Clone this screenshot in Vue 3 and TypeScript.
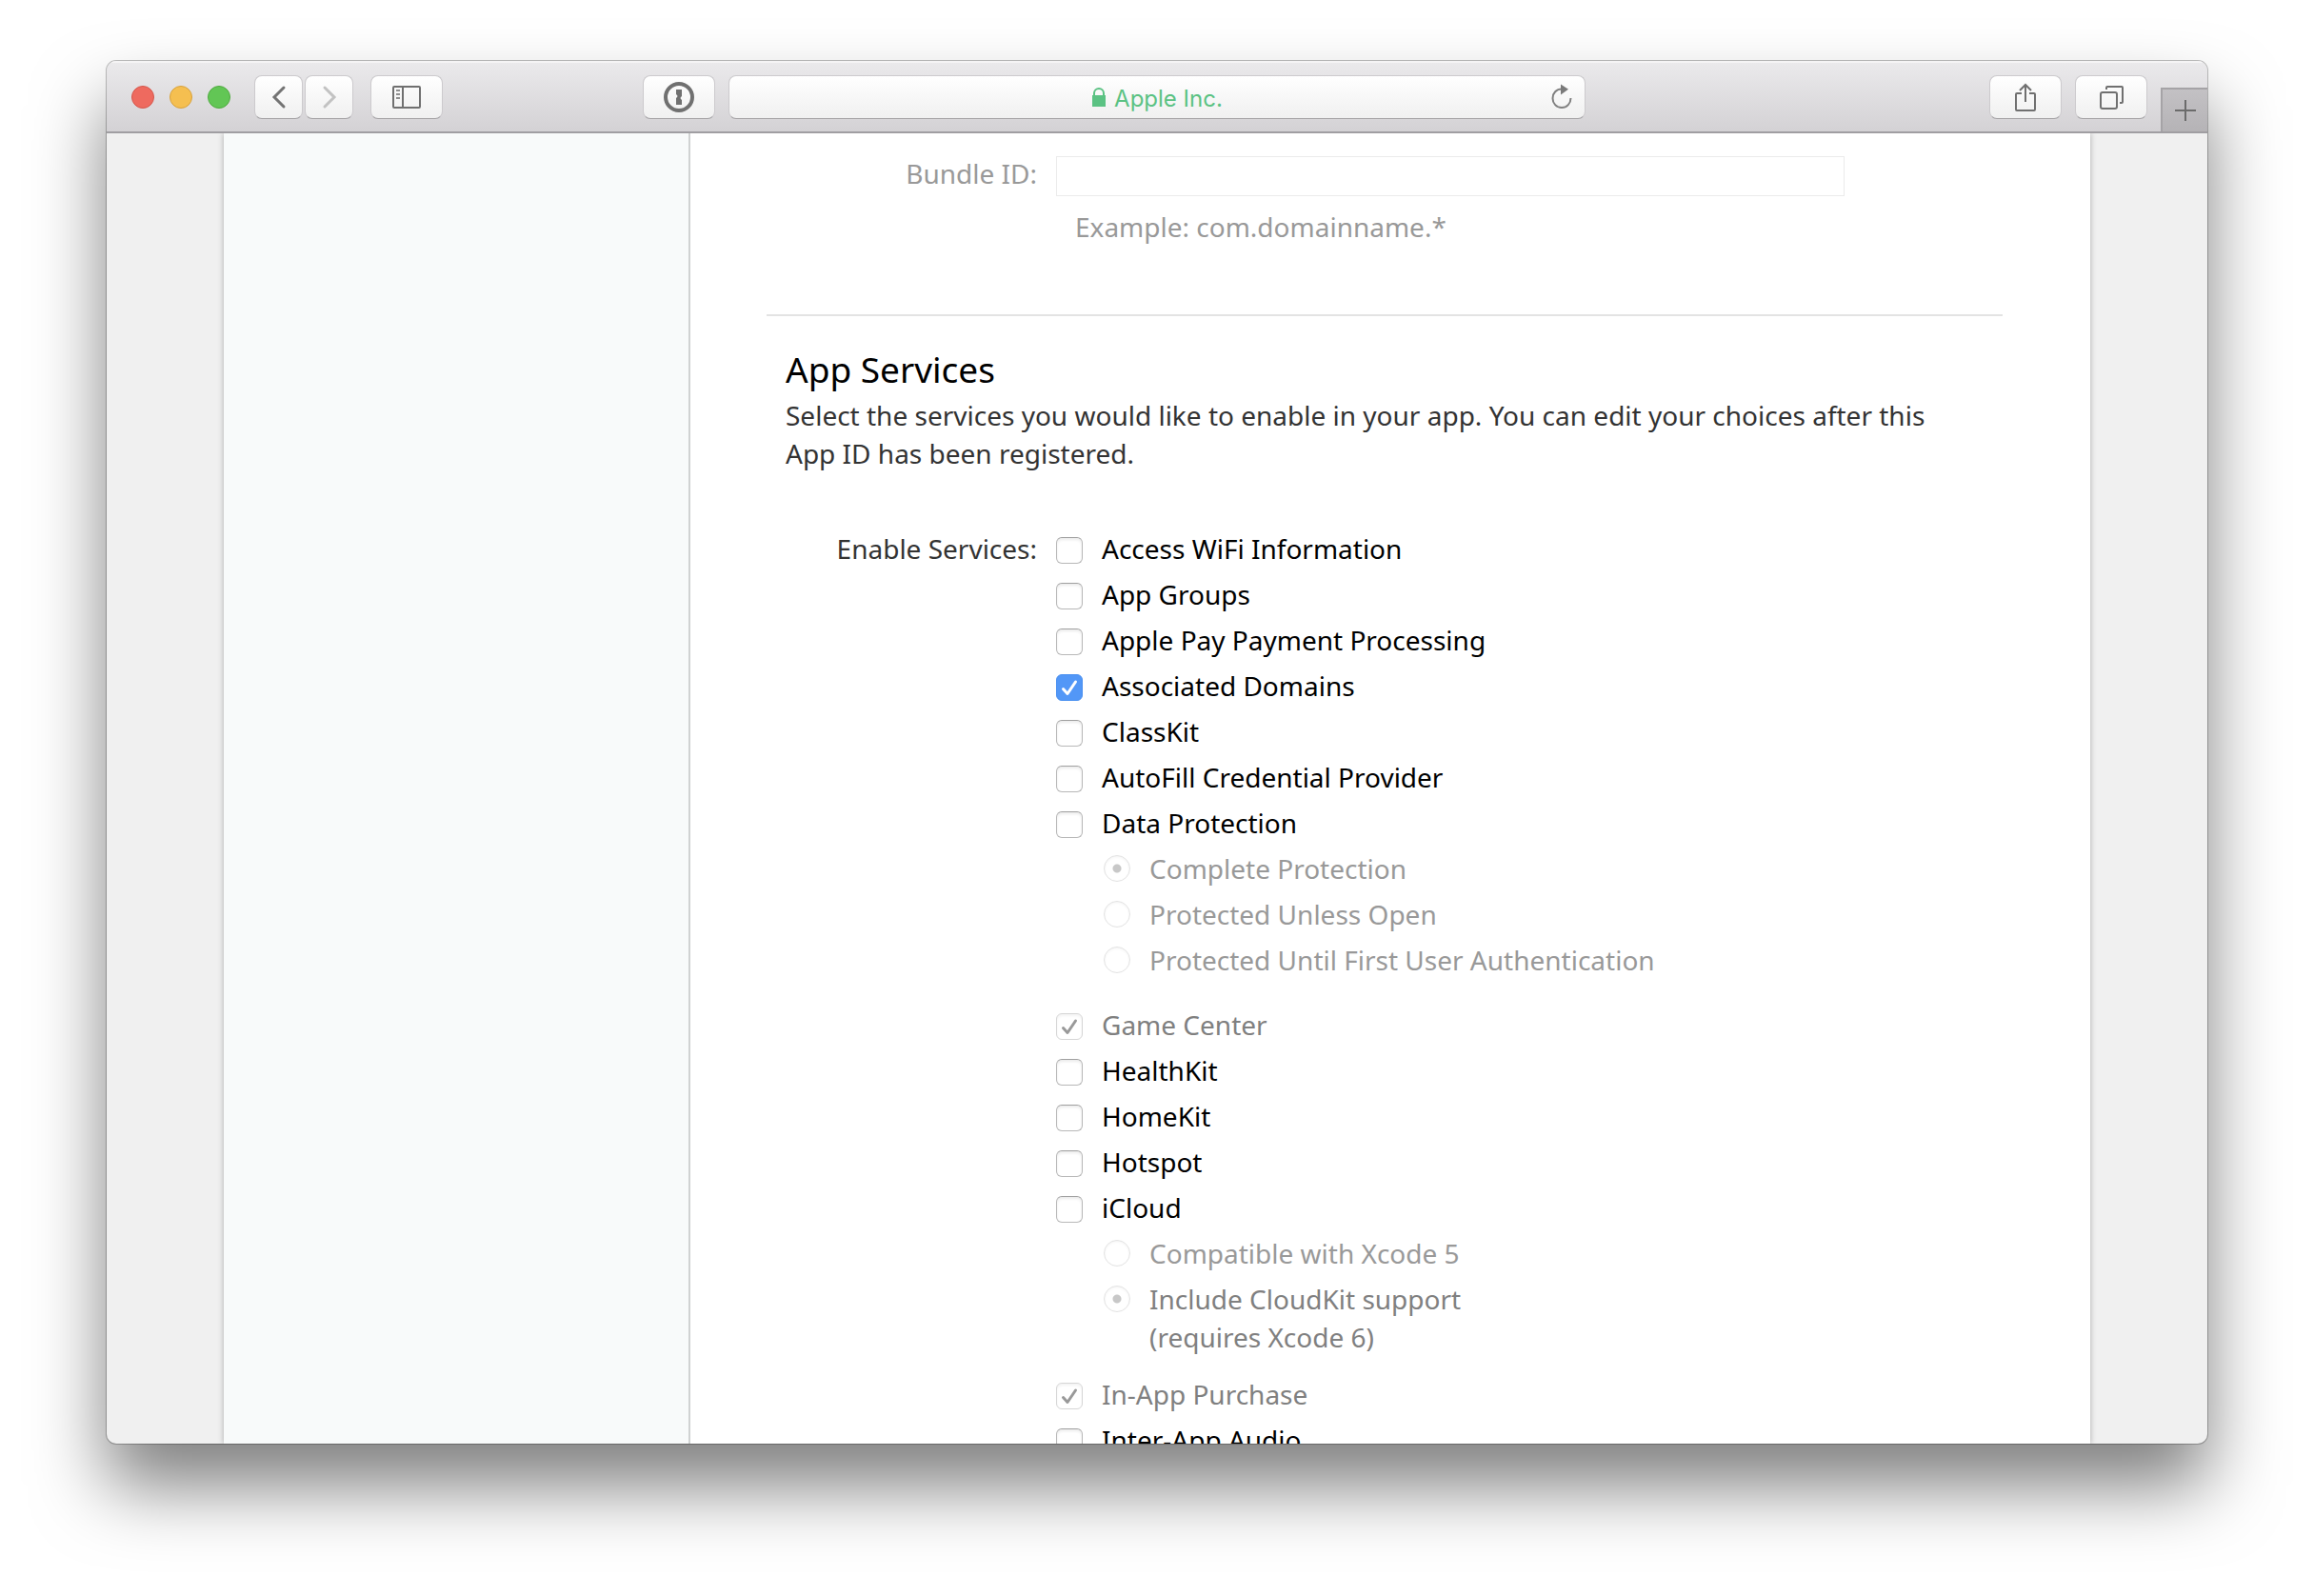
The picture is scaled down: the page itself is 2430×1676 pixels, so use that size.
<script setup lang="ts">
import { ref } from 'vue'

interface Option {
  id: string
  label: string
  note?: string
  checked?: boolean
  dim?: boolean
}

interface Service extends Option {
  locked?: boolean
  options?: Option[]
}

const bundleId = ref('')

const services = ref<Service[]>([
  { id: 'wifi', label: 'Access WiFi Information' },
  { id: 'groups', label: 'App Groups' },
  { id: 'pay', label: 'Apple Pay Payment Processing' },
  { id: 'domains', label: 'Associated Domains', checked: true },
  { id: 'classkit', label: 'ClassKit' },
  { id: 'autofill', label: 'AutoFill Credential Provider' },
  {
    id: 'data',
    label: 'Data Protection',
    options: [
      { id: 'complete', label: 'Complete Protection', checked: true },
      { id: 'unless-open', label: 'Protected Unless Open' },
      { id: 'until-auth', label: 'Protected Until First User Authentication' },
    ],
  },
  { id: 'game', label: 'Game Center', checked: true, locked: true },
  { id: 'health', label: 'HealthKit' },
  { id: 'home', label: 'HomeKit' },
  { id: 'hotspot', label: 'Hotspot' },
  {
    id: 'icloud',
    label: 'iCloud',
    options: [
      { id: 'xcode5', label: 'Compatible with Xcode 5' },
      { id: 'cloudkit', label: 'Include CloudKit support', note: '(requires Xcode 6)', checked: true, dim: true },
    ],
  },
  { id: 'iap', label: 'In-App Purchase', checked: true, locked: true },
  { id: 'audio', label: 'Inter-App Audio' },
])
</script>

<template>
  <div class="desktop">
    <div class="window">
      <header class="toolbar">
        <div class="side">
          <div class="lights">
            <button class="light close" aria-label="Close"></button>
            <button class="light minimise" aria-label="Minimise"></button>
            <button class="light zoom" aria-label="Zoom"></button>
          </div>
          <div class="history">
            <button class="tool narrow" aria-label="Back">
              <svg width="16" height="26" viewBox="0 0 16 26" fill="none" stroke="#737373" stroke-width="3" stroke-linecap="round"><path d="M13 3 3 13l10 10" /></svg>
            </button>
            <button class="tool narrow" aria-label="Forward" disabled>
              <svg width="16" height="26" viewBox="0 0 16 26" fill="none" stroke="#c2c2c2" stroke-width="3" stroke-linecap="round"><path d="m3 3 10 10L3 23" /></svg>
            </button>
          </div>
          <button class="tool" aria-label="Show sidebar">
            <svg width="30" height="24" viewBox="0 0 30 24" fill="none" stroke="#707070" stroke-width="2">
              <rect x="1" y="1" width="28" height="22" rx="1" />
              <path d="M11 1v22" />
              <path d="M4 5h4M4 9h4M4 13h4" stroke="#8f8f8f" />
            </svg>
          </button>
          <button class="tool password" aria-label="Passwords">
            <svg width="32" height="32" viewBox="0 0 32 32">
              <circle cx="16" cy="16" r="14" fill="none" stroke="#707070" stroke-width="4" />
              <path d="M13 8h6v7l-1 1q-1 1 0 2l1 1v5h-6v-7l1-1q1-1 0-2l-1-1z" fill="#707070" />
            </svg>
          </button>
        </div>
        <div class="address">
          <button class="site">
            <svg width="16" height="20" viewBox="0 0 16 20">
              <path d="M3 9V6a5 5 0 0 1 10 0v3" fill="none" stroke="#5bc283" stroke-width="2" />
              <path d="M1 8h14v12H1z" fill="#5bc283" />
            </svg>
            <span>Apple Inc.</span>
          </button>
          <button class="reload" aria-label="Reload">
            <svg width="24" height="28" viewBox="0 0 24 28">
              <path d="M12 5.500C6.500 5.500 2.500 9.700 2.500 15.200S6.500 25 12 25s9.500-4.300 9.500-10" fill="none" stroke="#808080" stroke-width="2" />
              <path d="M11 .500 19 5.800l-8 5.600z" fill="#7a7a7a" />
            </svg>
          </button>
        </div>
        <div class="side end">
          <button class="tool" aria-label="Share">
            <svg width="24" height="32" viewBox="0 0 24 32" fill="none" stroke="#707070" stroke-width="2">
              <path d="M8 12H3q-1 0-1 1v16q0 1 1 1h18q1 0 1-1V13q0-1-1-1h-5M12 21V3M6 9l6-6 6 6" />
            </svg>
          </button>
          <button class="tool" aria-label="Show all tabs">
            <svg width="26" height="26" viewBox="0 0 26 26" fill="none" stroke="#707070" stroke-width="2">
              <rect x="2" y="8" width="17" height="17" rx="2" />
              <path d="M8 5V3q0-1 1-1h15q1 0 1 1v15q0 1-1 1h-2" />
            </svg>
          </button>
          <button class="new-tab" aria-label="New tab">
            <svg width="24" height="24" viewBox="0 0 24 24" fill="none" stroke="#6b6b6b" stroke-width="2"><path d="M12 1v22M1 12h22" /></svg>
          </button>
        </div>
      </header>

      <div class="page">
        <div class="sheet">
          <aside class="sidebar"></aside>
          <main class="content">
            <form>
              <div class="field muted">
                <label class="name" for="bundle">Bundle ID:</label>
                <div class="entry">
                  <input id="bundle" v-model="bundleId" class="text" type="text" disabled />
                  <p class="hint">Example: com.domainname.*</p>
                </div>
              </div>
              <hr />
              <section class="intro">
                <h2>App Services</h2>
                <p>Select the services you would like to enable in your app. You can edit your choices after this App ID has been registered.</p>
              </section>
              <div class="field" role="group" aria-labelledby="enable">
                <span id="enable" class="name">Enable Services:</span>
                <ul class="services">
                  <li v-for="s in services" :key="s.id">
                    <label class="choice" :class="{ locked: s.locked }">
                      <span class="box">
                        <input v-model="s.checked" type="checkbox" :disabled="s.locked" />
                        <svg v-if="s.checked" width="28" height="28" viewBox="0 0 28 28" fill="none" stroke="currentColor" stroke-width="3" stroke-linecap="round" stroke-linejoin="round"><path d="m7.500 15.500 4.500 5L20.500 8" /></svg>
                      </span>
                      <span>{{ s.label }}</span>
                    </label>
                    <ul v-if="s.options" class="options" :class="s.id">
                      <li v-for="o in s.options" :key="o.id">
                        <label class="choice option" :class="{ dim: o.dim }">
                          <input type="radio" :name="s.id" :checked="o.checked" disabled />
                          <span>{{ o.label }}<template v-if="o.note"><br />{{ o.note }}</template></span>
                        </label>
                      </li>
                    </ul>
                  </li>
                </ul>
              </div>
            </form>
          </main>
        </div>
      </div>
    </div>
  </div>
</template>

<style>
body {
  margin: 0;
  background: #fff;
}
</style>

<style scoped>
.desktop {
  box-sizing: border-box;
  height: 100vh;
  padding: 64px 112px 160px;
  overflow: hidden;
  font-family: "Noto Sans", "Open Sans", sans-serif;
  font-size: 28px;
  line-height: 40px;
  color: #000;
}

.window {
  display: flex;
  flex-direction: column;
  height: 100%;
  border-radius: 10px;
  overflow: hidden;
  background: #f0f0f0;
  box-shadow: 0 0 0 1px rgba(0, 0, 0, 0.25), 0 45px 76px rgba(0, 0, 0, 0.5);
}

button {
  padding: 0;
  border: 0;
  background: none;
  font: inherit;
}

svg {
  display: block;
}

/* Toolbar */
.toolbar {
  flex: none;
  display: grid;
  grid-template-columns: 1fr minmax(0, 900px) 1fr;
  height: 76px;
  align-items: center;
  background: linear-gradient(#ebeaec, #d3d1d4);
  box-shadow: inset 0 2px #f5f4f5, inset 0 -2px #a09ea2;
}

.side {
  display: flex;
  align-items: center;
  height: 100%;
  padding: 0 14px 0 26px;
}

.side.end {
  justify-content: flex-end;
  gap: 14px;
  padding: 0;
}

.lights {
  display: flex;
  gap: 16px;
  margin-right: 25px;
}

.light {
  box-sizing: border-box;
  width: 24px;
  height: 24px;
  border: 1px solid;
  border-radius: 50%;
}

.close {
  background: #ee6a5f;
  border-color: #d5564b;
}

.minimise {
  background: #f5bf50;
  border-color: #d8a13b;
}

.zoom {
  background: #62c655;
  border-color: #4faa3f;
}

.history {
  display: flex;
  gap: 2px;
  margin-right: 18px;
}

.tool,
.address {
  box-sizing: border-box;
  height: 46px;
  border: 1px solid #cccacd;
  border-bottom-color: #a5a3a6;
  border-radius: 8px;
  background: linear-gradient(#fff, #f0f0f0);
}

.tool {
  display: flex;
  align-items: center;
  justify-content: center;
  width: 76px;
}

.tool.narrow {
  width: 51px;
}

.password {
  margin-left: auto;
}

.address {
  display: flex;
  align-items: center;
  padding-right: 12px;
}

.site {
  display: flex;
  flex: 1;
  align-items: center;
  justify-content: center;
  gap: 8px;
  padding-left: 36px;
  color: #5bc283;
  font-family: Inter, "Liberation Sans", sans-serif;
  font-size: 24px;
}

.site span {
  padding-top: 4px;
}

.new-tab {
  box-sizing: border-box;
  display: flex;
  align-items: center;
  justify-content: center;
  align-self: flex-end;
  width: 49px;
  height: 46px;
  margin-bottom: 2px;
  border: solid #a5a3a6;
  border-width: 2px 0 0 2px;
  background: linear-gradient(#c3c1c4, #b5b3b6);
}

/* Page */
.page {
  flex: 1;
  min-height: 0;
  padding: 0 123px;
  overflow: hidden;
}

.sheet {
  display: flex;
  height: 100%;
  background: #fff;
  box-shadow: 0 0 6px rgba(0, 0, 0, 0.3);
}

.sidebar {
  flex: none;
  width: 488px;
  border-right: 2px solid #d0d2d2;
  background: #f8fafa;
}

.content {
  flex: 1;
  min-width: 0;
  padding: 22px 92px 0 80px;
}

.field {
  display: grid;
  grid-template-columns: 264px 1fr;
  gap: 20px;
  padding: 0 20px;
}

.name {
  color: #333;
  text-align: right;
}

.muted .name,
.hint {
  color: #999;
}

.entry {
  width: 828px;
  max-width: 100%;
  padding-top: 2px;
}

.text {
  box-sizing: border-box;
  display: block;
  width: 100%;
  height: 42px;
  border: 1px solid #ebebeb;
  background: #fff;
}

.hint {
  margin: 12px 20px 72px;
}

hr {
  height: 2px;
  margin: 0;
  border: 0;
  background: #e3e3e3;
}

.intro {
  margin: 36px 0 60px;
  padding: 0 40px 0 20px;
}

.intro h2 {
  margin: 0 0 8px;
  font-size: 37px;
  font-weight: 400;
}

.intro p {
  margin: 0;
  color: #333;
}

.services,
.options {
  display: grid;
  gap: 8px;
  margin: 0;
  padding: 0;
  list-style: none;
}

.options {
  margin: 8px 0 20px 50px;
}

.options.icloud {
  margin-bottom: 12px;
}

.choice {
  display: flex;
  align-items: flex-start;
  gap: 20px;
}

.choice.locked,
.choice.dim {
  color: #808080;
}

.option {
  color: #999;
}

.box {
  position: relative;
  margin: 8px 0 4px;
}

.box svg {
  position: absolute;
  inset: 0;
  color: #fff;
  pointer-events: none;
}

.locked .box svg {
  color: #999;
}

input[type="checkbox"],
input[type="radio"] {
  appearance: none;
  box-sizing: border-box;
  display: block;
  flex: none;
  width: 28px;
  height: 28px;
  margin: 0;
  border: 1px solid #b8b8b8;
  border-top-color: #a0a0a0;
  border-radius: 6px;
  background: #fff;
  box-shadow: inset 0 2px 3px rgba(0, 0, 0, 0.08);
}

input[type="checkbox"]:checked {
  border-color: #4a90f0;
  background: #5297f7;
  box-shadow: none;
}

.locked input[type="checkbox"]:checked {
  border-color: #d6d6d6;
  background: #fff;
  box-shadow: inset 0 2px 3px rgba(0, 0, 0, 0.05);
}

input[type="radio"] {
  margin: 6px 0 4px;
  border-color: #e3e3e3;
  border-radius: 50%;
  box-shadow: inset 0 1px 3px rgba(0, 0, 0, 0.05);
}

input[type="radio"]:checked {
  background: radial-gradient(circle, #c8c8c8 4px, #fff 5px);
}
</style>
